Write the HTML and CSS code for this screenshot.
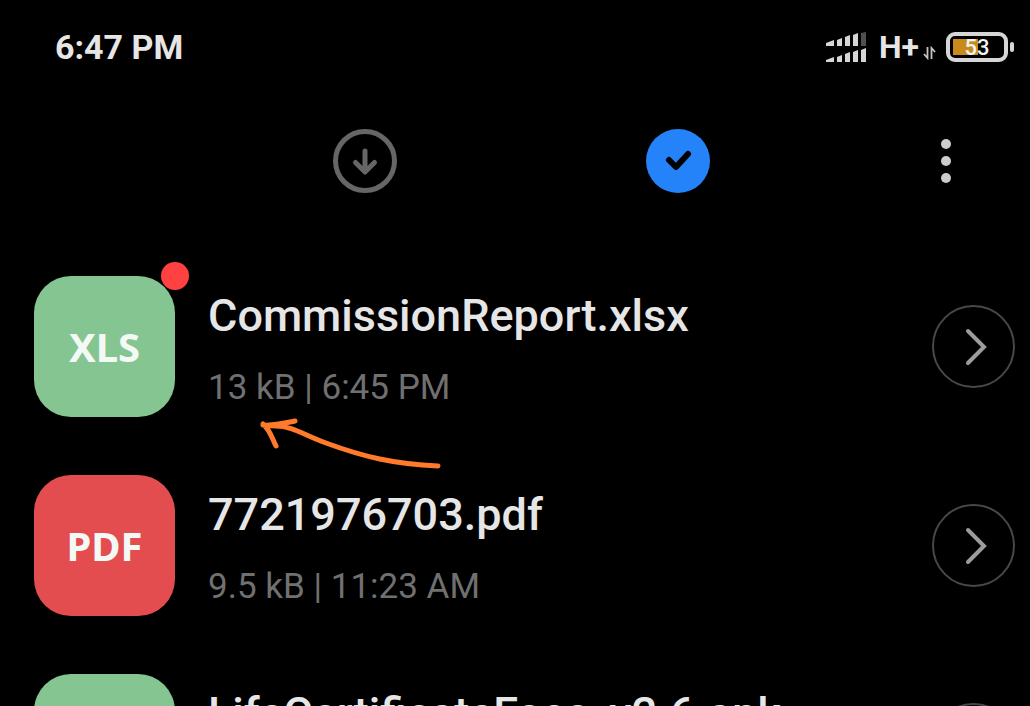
FILE: index.html
```
<!DOCTYPE html>
<html lang="en">

<head>
    <meta charset="UTF-8">
    <meta name="viewport" content="width=device-width, initial-scale=1.0">
    <link rel="stylesheet" href="styles.css">
    <title>Downloads</title>
</head>

<body>
    <header class="status">
        <time class="clock">6:47 PM</time>
        <div class="indicators">
            <svg class="signal" width="42" height="32" viewBox="0 0 42 32">
                <path d="M0 12l8-3v6H0zM11 9l5-2v8h-5zM19 6l5-2v11h-5zM27 4l5-2v13h-5z" fill="#d6d6d6" />
                <path d="M35 2l5-1v14h-5z" fill="#505050" />
                <path d="M0 29l8-3v5H0zM11 26l5-2v7h-5zM19 23l5-2v10h-5zM27 21l5-2v12h-5zM35 19l5-2v14h-5z" fill="#d6d6d6" />
            </svg>
            <span class="network">H+</span>
            <svg class="data" width="13" height="14" viewBox="0 0 13 14">
                <path d="M4.5 1v11L1 8M8.500 13V2l3.500 4" fill="none" stroke="#c4c4c4" stroke-width="1.800" />
            </svg>
            <div class="battery"><span>53</span></div>
        </div>
    </header>

    <nav class="tabs">
        <button class="tab" type="button" aria-label="Downloading">
            <svg width="66" height="66" viewBox="0 0 66 66" fill="none" stroke="#666" stroke-linecap="round" stroke-linejoin="round">
                <circle cx="33" cy="33" r="29.500" stroke-width="5" />
                <path d="M33 23v20M23.500 34.500l9.500 9.500 9.500-9.500" stroke-width="5" />
            </svg>
        </button>
        <button class="tab" type="button" aria-label="Downloaded">
            <svg width="66" height="66" viewBox="0 0 66 66" fill="none">
                <circle cx="33" cy="33" r="32" fill="#2483f8" />
                <path d="M24 32l7 7 12-13" stroke="#000" stroke-width="6" stroke-linecap="round" stroke-linejoin="round" />
            </svg>
        </button>
        <button class="menu" type="button" aria-label="More">
            <svg width="60" height="60" viewBox="0 0 60 60" fill="#ccc">
                <circle cx="30" cy="13" r="5" />
                <circle cx="30" cy="30" r="5" />
                <circle cx="30" cy="47" r="5" />
            </svg>
        </button>
    </nav>

    <main class="files">
        <div class="file">
            <div class="icon green">XLS<span class="dot"></span></div>
            <div class="details">
                <h2>CommissionReport.xlsx</h2>
                <p>13 kB | 6:45 PM</p>
            </div>
            <button class="open" type="button" aria-label="Open">
                <svg width="24" height="40" viewBox="0 0 24 40">
                    <path d="M4 4l16 16L4 36" />
                </svg>
            </button>
            <svg class="arrow" width="194" height="62" viewBox="0 0 194 62">
                <path d="M184 52C140 50 110 43 72 29C50 21 38 12 22 12L9 11C20 12 31 9 41 7M9 10C16 16 18 24 22 32" />
            </svg>
        </div>

        <div class="file">
            <div class="icon red">PDF</div>
            <div class="details">
                <h2>7721976703.pdf</h2>
                <p>9.5 kB | 11:23 AM</p>
            </div>
            <button class="open" type="button" aria-label="Open">
                <svg width="24" height="40" viewBox="0 0 24 40">
                    <path d="M4 4l16 16L4 36" />
                </svg>
            </button>
        </div>

        <div class="file">
            <div class="icon green"></div>
            <div class="details">
                <h2>LifeCertificateFace_v2.6.apk</h2>
            </div>
            <button class="open" type="button" aria-label="Open">
                <svg width="24" height="40" viewBox="0 0 24 40">
                    <path d="M4 4l16 16L4 36" />
                </svg>
            </button>
        </div>
    </main>
</body>

</html>
```
FILE: styles.css
```
* {
    margin: 0;
    padding: 0;
    box-sizing: border-box;
}

body {
    height: 100vh;
    overflow: hidden;
    background-color: #000;
    color: #e6e6e6;
    font-family: Roboto, sans-serif;
}

button {
    background: none;
    border: none;
    cursor: pointer;
}

svg {
    display: block;
}

.status {
    display: flex;
    justify-content: space-between;
    align-items: center;
    height: 94px;
    padding: 0 16px 0 55px;
}

.clock {
    font-size: 34px;
    font-weight: 700;
    line-height: 38px;
}

.indicators {
    display: flex;
    align-items: center;
}

.network {
    margin-left: 11px;
    font-size: 32px;
    font-weight: 700;
}

.data {
    margin: 12px 10px 0 4px;
}

.battery {
    position: relative;
    width: 62px;
    height: 30px;
    margin-right: 6px;
    border: 4px solid #d6d6d6;
    border-radius: 9px;
    background: linear-gradient(#c98a1c, #c98a1c) 3px 3px / 25px 16px no-repeat;
    color: #f4f4f4;
    font-size: 22px;
    font-weight: 500;
    line-height: 24px;
    text-align: center;
}

.battery::after {
    content: "";
    position: absolute;
    top: 6px;
    right: -10px;
    width: 4px;
    height: 10px;
    border-radius: 2px;
    background-color: #d6d6d6;
}

.tabs {
    display: grid;
    grid-template-columns: 1fr 1fr 142px;
    align-items: center;
    height: 134px;
    padding: 0 54px 0 208px;
}

.tab,
.menu {
    justify-self: center;
}

.menu {
    justify-self: end;
}

.files {
    display: flex;
    flex-direction: column;
    gap: 58px;
    padding: 48px 15px 0 34px;
}

.file {
    position: relative;
    display: flex;
    align-items: center;
    gap: 33px;
}

.icon {
    position: relative;
    flex: none;
    width: 141px;
    height: 141px;
    border-radius: 37px;
    color: #f5f9f6;
    font-family: "Noto Sans", sans-serif;
    font-size: 40px;
    font-weight: 700;
    line-height: 142px;
    text-align: center;
}

.green {
    background-color: #84c591;
}

.red {
    background-color: #e34d4f;
}

.dot {
    position: absolute;
    top: -14px;
    right: -14px;
    width: 28px;
    height: 28px;
    border-radius: 50%;
    background-color: #ff4141;
}

.details {
    flex: 1;
    align-self: flex-start;
    padding-top: 13px;
}

.details h2 {
    font-size: 45px;
    font-weight: 500;
    line-height: 54px;
}

.details p {
    margin-top: 24px;
    color: #707070;
    font-size: 35px;
    line-height: 42px;
}

.open {
    display: flex;
    justify-content: center;
    align-items: center;
    width: 83px;
    height: 83px;
    padding-left: 5px;
    border: 2px solid #484848;
    border-radius: 50%;
}

.open path {
    fill: none;
    stroke: #9c9c9c;
    stroke-width: 4;
    stroke-linecap: round;
}

.arrow {
    position: absolute;
    top: 138px;
    left: 220px;
}

.arrow path {
    fill: none;
    stroke: #ff7a2a;
    stroke-width: 5;
    stroke-linecap: round;
    stroke-linejoin: round;
}
```
